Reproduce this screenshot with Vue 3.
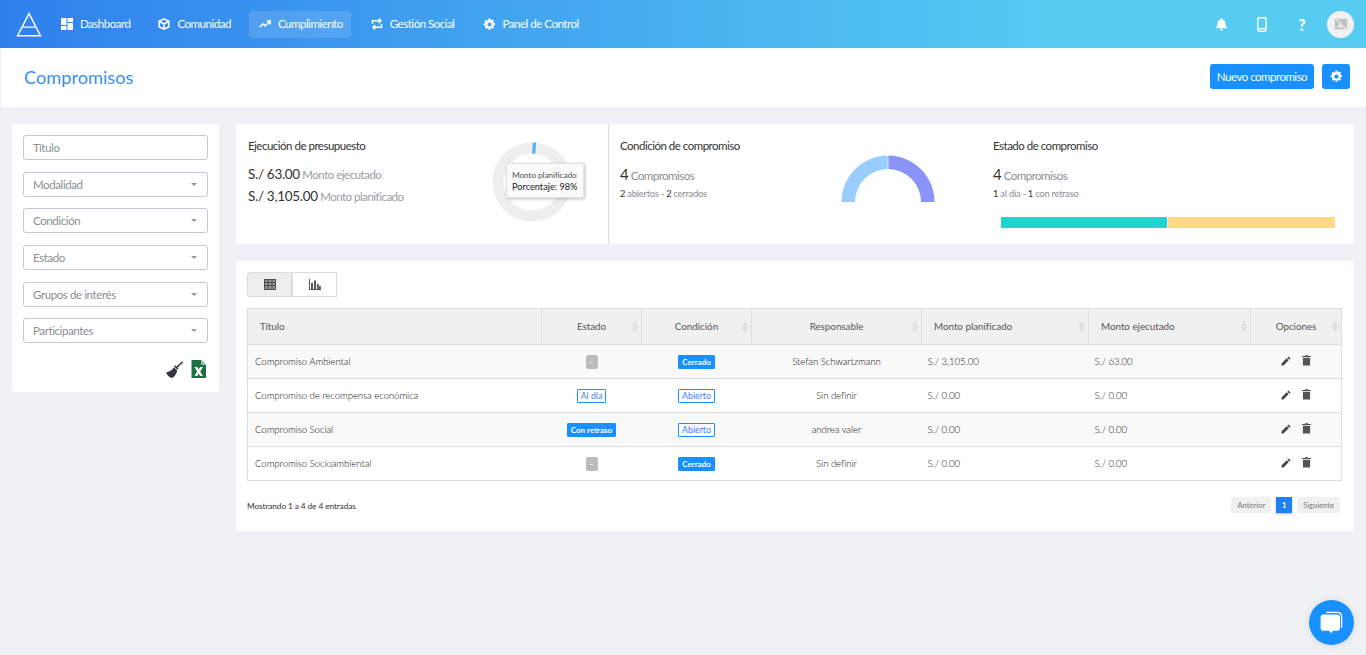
<script setup>
const nav = [
  { label: 'Dashboard', icon: 'dash' },
  { label: 'Comunidad', icon: 'cube' },
  { label: 'Cumplimiento', icon: 'trend', active: true },
  { label: 'Gestión Social', icon: 'retweet' },
  { label: 'Panel de Control', icon: 'gear' }
]
const filters = ['Modalidad', 'Condición', 'Estado', 'Grupos de interés', 'Participantes']
const cols = [
  { t: 'Título', w: 294, left: true, nosort: true },
  { t: 'Estado', w: 100 },
  { t: 'Condición', w: 110 },
  { t: 'Responsable', w: 170 },
  { t: 'Monto planificado', w: 167, left: true },
  { t: 'Monto ejecutado', w: 162, left: true },
  { t: 'Opciones', w: 91 }
]
const rows = [
  { t: 'Compromiso Ambiental', e: ['-', 'grey'], c: ['Cerrado', 'solid'], r: 'Stefan Schwartzmann', p: 'S./ 3,105.00', m: 'S./ 63.00' },
  { t: 'Compromiso de recompensa económica', e: ['Al día', 'line'], c: ['Abierto', 'line'], r: 'Sin definir', p: 'S./ 0.00', m: 'S./ 0.00' },
  { t: 'Compromiso Social', e: ['Con retraso', 'solid'], c: ['Abierto', 'line'], r: 'andrea valer', p: 'S./ 0.00', m: 'S./ 0.00' },
  { t: 'Compromiso Socioambiental', e: ['-', 'grey'], c: ['Cerrado', 'solid'], r: 'Sin definir', p: 'S./ 0.00', m: 'S./ 0.00' }
]
const gearPath = 'M10.300 1h3.400l.5 2.600 1.700.7 2.200-1.500 2.400 2.400-1.500 2.200.7 1.700 2.600.5v3.400l-2.600.5-.7 1.700 1.500 2.200-2.400 2.400-2.200-1.500-1.700.7-.5 2.600h-3.400l-.5-2.600-1.700-.7-2.200 1.500-2.400-2.400 1.500-2.200-.7-1.700L1 13.700v-3.400l2.600-.5.7-1.700-1.500-2.200 2.400-2.400 2.200 1.500 1.700-.7zM12 8.200a3.800 3.800 0 1 0 0 7.600 3.800 3.800 0 0 0 0-7.600z'
</script>

<template>
  <div class="page">
    <header class="topbar">
      <svg class="logo" viewBox="0 0 24 24" width="26" height="25" fill="none" stroke="#fff" stroke-width="1.400">
        <path d="M12 1.500 23 22.700H1zM5.250 14.500h13.500" />
      </svg>
      <nav class="nav">
        <a v-for="n in nav" :key="n.label" class="nav-item" :class="{ active: n.active }">
          <svg v-if="n.icon === 'dash'" viewBox="0 0 12 12" width="12" height="12" fill="#fff">
            <path d="M0 0h5.500v7H0zM6.500 0H12v4H6.500zM6.500 5H12v7H6.500zM0 8h5.500v4H0z" />
          </svg>
          <svg v-else-if="n.icon === 'cube'" viewBox="0 0 12 12" width="12" height="12" fill="none" stroke="#fff" stroke-width="1.600">
            <path d="M6 .9 10.800 3.200V8.800L6 11.100 1.200 8.800V3.200zM1.500 3.500 6 6l4.500-2.500M6 6v5" />
          </svg>
          <svg v-else-if="n.icon === 'trend'" viewBox="0 0 12 12" width="12" height="12" fill="none" stroke="#fff" stroke-width="1.500">
            <path d="M.6 9.200 4 5.800l2.200 2.200 4.500-4.600M7.800 3h3.400v3.400" />
          </svg>
          <svg v-else-if="n.icon === 'retweet'" viewBox="0 0 12 12" width="12" height="12" fill="none" stroke="#fff" stroke-width="1.500">
            <path d="M1.500 6V2.800h7.800M7.800.6l2.200 2.200L7.800 5M10.500 6v3.200H2.700M4.200 7 2 9.200l2.200 2.200" />
          </svg>
          <svg v-else viewBox="0 0 24 24" width="13" height="13" fill="#fff"><path :d="gearPath" /></svg>
          <span>{{ n.label }}</span>
        </a>
      </nav>
      <div class="top-right">
        <svg viewBox="0 0 12 14" width="11" height="13" fill="#fff">
          <path d="M6 0a1 1 0 0 1 1 1v.6c2 .4 3.300 2 3.300 4.200 0 3 1.700 4.200 1.700 4.800V11H0v-.4c0-.6 1.700-1.800 1.700-4.800C1.700 3.600 3 2 5 1.600V1a1 1 0 0 1 1-1zM4.400 12h3.200a1.600 1.600 0 0 1-3.200 0z" />
        </svg>
        <svg viewBox="0 0 10 15" width="10" height="15" fill="none" stroke="#fff" stroke-width="1.400">
          <rect x=".8" y=".8" width="8.400" height="13.400" rx="1.400" />
          <path d="M1 11.600h8" />
        </svg>
        <span class="help">?</span>
        <span class="avatar">
          <svg viewBox="0 0 16 16" width="14" height="14">
            <path d="M1 2h14v12H1z" fill="#bfc1c3" />
            <path d="M1 1 15 15" stroke="#f1f1f1" stroke-width="1.300" />
            <path d="M3 12 7 7l4 5z" fill="#e8e8e8" />
          </svg>
        </span>
      </div>
    </header>

    <section class="subheader">
      <h1>Compromisos</h1>
      <div class="sub-actions">
        <button class="btn">Nuevo compromiso</button>
        <button class="btn btn-icon">
          <svg viewBox="0 0 24 24" width="13" height="13" fill="#fff"><path :d="gearPath" /></svg>
        </button>
      </div>
    </section>

    <main class="content">
      <aside class="filters">
        <div class="field text">Título</div>
        <div v-for="f in filters" :key="f" class="field">
          <span>{{ f }}</span><i class="caret"></i>
        </div>
        <div class="filter-tools">
          <svg viewBox="0 0 16 16" width="17" height="17">
            <path d="M15.600.8 10 6" stroke="#3f4246" stroke-width="1.500" />
            <path d="M8.800 3.900l3 3-1.200 1.300-3-3z" fill="#3f4246" />
            <path d="M7.400 5.800 10.500 8.900C10 12 8 15 5.500 16 3 15.500.8 13 .2 10.500 3 10 6 8.500 7.400 5.800z" fill="#33363a" />
          </svg>
          <svg viewBox="0 0 15 18" width="15" height="18">
            <path d="M.500 0H10l5 5v13H.500z" fill="#1d6f42" />
            <path d="M10 0v5h5z" fill="#8fc2a5" />
            <path d="M3.500 7h2.800L7.700 9.600 9.100 7h2.800L9.200 11.500l2.700 4.500H9.100L7.700 13.400 6.300 16H3.500l2.700-4.500z" fill="#fff" />
          </svg>
        </div>
      </aside>

      <div class="main-col">
        <section class="stats card">
          <div class="stat stat-budget">
            <h3>Ejecución de presupuesto</h3>
            <p class="money"><b>S./ 63.00</b> Monto ejecutado</p>
            <p class="money"><b>S./ 3,105.00</b> Monto planificado</p>
            <div class="donut-wrap">
              <svg viewBox="0 0 80 80" width="80" height="80" fill="none">
                <circle cx="40" cy="40" r="34" stroke="#eeeeee" stroke-width="11" />
                <path d="M40.400 6 43.800 6.200" stroke="#5db1fb" stroke-width="11" />
              </svg>
              <div class="tip">
                <div class="tip-a">Monto planificado</div>
                <div class="tip-b">Porcentaje: 98%</div>
              </div>
            </div>
          </div>
          <div class="stat stat-cond">
            <h3>Condición de compromiso</h3>
            <p class="count"><b>4</b> Compromisos</p>
            <p class="small"><b>2</b> abiertos - <b>2</b> cerrados</p>
            <svg class="half" viewBox="0 0 94 47" width="94" height="47">
              <path d="M46.600 .5A46.500 46.500 0 0 0 .5 47H14A33 33 0 0 1 46.600 14z" fill="#99ccff" />
              <path d="M47.400 .5A46.500 46.500 0 0 1 93.500 47H80A33 33 0 0 0 47.400 14z" fill="#8a94f8" />
            </svg>
          </div>
          <div class="stat stat-state">
            <h3>Estado de compromiso</h3>
            <p class="count"><b>4</b> Compromisos</p>
            <p class="small"><b>1</b> al día - <b>1</b> con retraso</p>
            <div class="bar"><span class="teal"></span><span class="yellow"></span></div>
          </div>
        </section>

        <section class="card table-card">
          <div class="toggle">
            <button class="tg on">
              <svg viewBox="0 0 12 11" width="12" height="11" fill="#9a9a9a" stroke="#4f4f4f" stroke-width="1.100">
                <path d="M.5.500h11v10H.500zM.5 3.500h11M.5 6.500h11M4 .500v10M8 .500v10" />
              </svg>
            </button>
            <button class="tg">
              <svg viewBox="0 0 12 11" width="12" height="11" fill="#555">
                <path d="M0 0h1v10h11v1H0zM2 4h2v6H2zM5 1.500h2V10H5zM8 5h1.800v5H8zM10 7h1.800v3H10z" />
              </svg>
            </button>
          </div>

          <table class="grid">
            <colgroup>
              <col v-for="c in cols" :key="c.t" :style="{ width: c.w + 'px' }" />
            </colgroup>
            <thead>
              <tr>
                <th v-for="c in cols" :key="c.t" :class="{ left: c.left }">
                  {{ c.t }}
                  <span v-if="!c.nosort" class="sort"><i class="up"></i><i class="down"></i></span>
                </th>
              </tr>
            </thead>
            <tbody>
              <tr v-for="r in rows" :key="r.t">
                <td class="left first">{{ r.t }}</td>
                <td><span class="tag" :class="r.e[1]">{{ r.e[0] }}</span></td>
                <td><span class="tag" :class="r.c[1]">{{ r.c[0] }}</span></td>
                <td>{{ r.r }}</td>
                <td class="left">{{ r.p }}</td>
                <td class="left">{{ r.m }}</td>
                <td>
                  <span class="ops">
                    <svg viewBox="0 0 12 12" width="10" height="10" fill="#444">
                      <path d="M9 .6 11.400 3 10 4.400 7.600 2zM6.800 2.800 9.200 5.200 3 11.400H.6V9z" />
                    </svg>
                    <svg viewBox="0 0 10 12" width="9" height="11" fill="#555">
                      <path d="M1 3h8v8.500H1zM0 1h3.200V.2h3.600V1H10v1.200H0z" />
                    </svg>
                  </span>
                </td>
              </tr>
            </tbody>
          </table>

          <div class="foot">
            <span class="info">Mostrando 1 a 4 de 4 entradas</span>
            <div class="pager">
              <span class="pg">Anterior</span>
              <span class="pg cur">1</span>
              <span class="pg">Siguiente</span>
            </div>
          </div>
        </section>
      </div>
    </main>

    <div class="chat">
      <svg viewBox="0 0 32 30" width="25" height="24">
        <path d="M9 1.500h14c3.500 0 6 2 6 5.500v14" fill="none" stroke="#fff" stroke-width="1.700" />
        <path d="M6 4h17c2.500 0 4 1.500 4 4v13c0 2.500-1.500 4-4 4h-5l-2.500 3L13 25H6c-2.500 0-4-1.500-4-4V8c0-2.500 1.500-4 4-4z" fill="#fff" />
      </svg>
    </div>
  </div>
</template>

<style>
html, body { margin: 0; background: #f0f1f5; }
</style>

<style scoped>
.page {
  height: 655px;
  overflow: hidden;
  position: relative;
  background: #f0f1f5;
  font-family: Lato, "Liberation Sans", sans-serif;
  color: #333;
  font-size: 12px;
}
.topbar {
  height: 48px;
  display: flex;
  align-items: center;
  padding: 0 12px 0 16px;
  background: linear-gradient(90deg, #2f80ed 0%, #56ccf2 78%);
  color: #fff;
  box-sizing: border-box;
}
.logo { flex: none; }
.nav { display: flex; align-items: center; margin-left: 9px; gap: 10px; }
.nav-item {
  display: flex;
  align-items: center;
  gap: 7px;
  height: 27px;
  padding: 0 8px 0 10px;
  border-radius: 4px;
  font-size: 11.500px;
  letter-spacing: -0.480px;
}
.nav-item span { padding-bottom: 2px; }
.nav-item.active { background: rgba(255, 255, 255, 0.12); }
.top-right { margin-left: auto; display: flex; align-items: center; }
.top-right > svg:first-child { margin-right: 30px; }
.top-right > svg:nth-child(2) { margin-right: 30px; }
.help { font-weight: 900; font-size: 16px; width: 10px; text-align: center; margin-right: 20px; }
.avatar {
  width: 27px; height: 27px; border-radius: 50%;
  background: #f1f1f1;
  display: flex; align-items: center; justify-content: center;
}
.subheader {
  height: 59px;
  background: #fff;
  display: flex;
  align-items: center;
  justify-content: space-between;
  padding: 0 16px 0 24px;
  margin-left: 1px;
}
.subheader h1 {
  margin: 0 0 2px -1px;
  font-size: 18.200px;
  font-weight: 400;
  color: #3a8ef6;
}
.sub-actions { display: flex; gap: 8px; margin-bottom: 2px; }
.btn {
  height: 25px;
  padding: 0;
  border: 0;
  border-radius: 3px;
  background: #1890ff;
  color: #fff;
  font: 400 11.500px Lato, sans-serif;
  letter-spacing: -0.500px;
  white-space: nowrap;
  width: 104px;
}
.btn-icon { width: 28px; display: flex; align-items: center; justify-content: center; }
.content {
  display: flex;
  align-items: flex-start;
  padding: 17px 12px 0;
  gap: 17px;
}
.filters {
  width: 207px;
  height: 268px;
  flex: none;
  background: #fff;
  border-radius: 2px;
  padding: 11px 11px 0;
  box-sizing: border-box;
  display: flex;
  flex-direction: column;
  gap: 11.700px;
}
.field {
  height: 25px;
  box-sizing: border-box;
  border: 1px solid #c2c8d4;
  border-radius: 3px;
  padding: 0 10px 0 9px;
  display: flex;
  align-items: center;
  justify-content: space-between;
  color: #8a8d92;
  font-size: 11.500px;
  letter-spacing: -0.400px;
}
.caret {
  width: 0; height: 0;
  border-left: 3px solid transparent;
  border-right: 3px solid transparent;
  border-top: 3px solid #999;
}
.filter-tools {
  display: flex;
  justify-content: flex-end;
  align-items: center;
  gap: 8px;
  margin-top: 5px;
  padding-right: 2px;
}
.main-col { flex: 1; display: flex; flex-direction: column; gap: 17px; min-width: 0; }
.card { background: #fff; border-radius: 2px; }
.stats { height: 120px; display: flex; }
.stat { position: relative; padding: 15px 0 0 12px; box-sizing: border-box; }
.stat h3 { margin: 0; font-size: 11.500px; line-height: 14px; font-weight: 400; color: #333; letter-spacing: -0.500px; }
.stat-budget { width: 373px; border-right: 1px solid #dcdcdc; }
.stat-cond { width: 373px; padding-left: 11px; }
.stat-state { flex: 1; padding-left: 11px; }
.money { margin: 13px 0 0; line-height: 16px; color: #9a9da2; font-size: 11.500px; letter-spacing: -0.500px; }
.money + .money { margin-top: 5px; }
.money b { font-weight: 400; color: #333; font-size: 13.500px; letter-spacing: -0.300px; }
.count { margin: 12px 0 0; line-height: 18px; color: #8a8d92; font-size: 11.500px; letter-spacing: -0.500px; }
.count b { font-weight: 400; color: #333; font-size: 15px; }
.small { margin: 3px 0 0; line-height: 12px; font-size: 9.400px; color: #8a8d92; letter-spacing: -0.250px; }
.small b { font-weight: 400; color: #333; }
.donut-wrap { position: absolute; left: 256px; top: 18px; width: 80px; height: 80px; }
.donut-wrap svg { display: block; }
.tip {
  position: absolute;
  left: 14px; top: 21px;
  width: 78px; height: 35px;
  box-sizing: border-box;
  padding: 6px 5px;
  background: rgba(250, 250, 250, 0.92);
  border: 1px solid #e2e2e2;
  box-shadow: 1px 1px 3px rgba(0, 0, 0, 0.25);
  color: #333;
  white-space: nowrap;
}
.tip-a { font-size: 8.300px; line-height: 11px; color: #555; letter-spacing: -0.100px; }
.tip-b { font-size: 9.200px; line-height: 11px; color: #222; }
.half { position: absolute; left: 232px; top: 31px; }
.bar { display: flex; height: 11px; width: 334px; margin: 17px 0 0 8px; }
.teal { width: 166px; background: #22d3d0; margin-right: 1px; }
.yellow { flex: 1; background: #fdd985; }
.table-card { height: 270px; padding: 11px 12px 0 11px; box-sizing: border-box; }
.toggle { display: flex; }
.tg {
  width: 45px; height: 25px;
  background: #fff;
  border: 1px solid #dcdcdc;
  padding: 0;
  display: flex; align-items: center; justify-content: center;
}
.tg.on { background: #eeeeee; border-radius: 3px 0 0 3px; }
.grid {
  margin-top: 11px;
  width: 1094px;
  border-collapse: collapse;
  table-layout: fixed;
  font-size: 9.700px;
  font-weight: 300;
  color: #111;
  letter-spacing: -0.100px;
}
.grid th, .grid td { border: 1px solid #dedede; text-align: center; padding: 0; position: relative; }
.grid td { border-left: 0; border-right: 0; padding-bottom: 2px; box-sizing: border-box; height: 34px; }
.grid td:first-child { border-left: 1px solid #dedede; }
.grid td:last-child { border-right: 1px solid #dedede; }
.grid th { height: 36px; box-sizing: border-box; padding-bottom: 1px; background: #f0f0f0; font-weight: 400; color: #555; font-size: 9.900px; letter-spacing: -0.050px; }
.grid th.left { text-align: left; padding-left: 12px; }
.grid td.left { text-align: left; padding-left: 6px; }
.grid td.first { padding-left: 7px; }
.grid tbody tr:nth-child(odd) { background: #f9f9f9; }
.sort { position: absolute; right: 3px; top: 12px; display: flex; flex-direction: column; gap: 1px; }
.sort i { width: 0; height: 0; border-left: 3px solid transparent; border-right: 3px solid transparent; }
.sort .up { border-bottom: 5px solid #dddddd; }
.sort .down { border-top: 5px solid #dddddd; }
.tag {
  display: inline-block;
  box-sizing: border-box;
  height: 14px;
  line-height: 12px;
  margin-top: 2px;
  padding: 0 3px;
  font-size: 8px;
  font-weight: 700;
  border-radius: 1px;
  border: 1px solid #1890ff;
  vertical-align: middle;
  letter-spacing: 0;
}
.tag.solid { background: #1890ff; color: #fff; }
.tag.line { background: #fff; color: #3e7cf0; font-weight: 400; font-size: 8.800px; }
.tag.grey { background: #bbb; border-color: #bbb; color: #fff; width: 12px; padding: 0; border-radius: 2px; }
.ops { display: inline-flex; align-items: center; gap: 11px; margin-top: 2px; }
.foot { display: flex; justify-content: space-between; align-items: center; margin-top: 18px; padding-right: 2px; }
.info { font-size: 8.300px; color: #333; letter-spacing: -0.100px; }
.pager { display: flex; align-items: center; gap: 5px; margin-top: -2px; }
.pg {
  height: 16px; line-height: 16px;
  padding: 0 6px;
  background: #f0f0f0;
  border-radius: 2px;
  font-size: 7.600px;
  color: #777;
}
.pg.cur { background: #1f80f0; color: #fff; font-weight: 700; padding: 0; width: 16px; text-align: center; box-shadow: 0 1px 2px rgba(0,0,0,.3); border-radius: 0; }
.chat {
  position: absolute;
  left: 1309px; top: 600px;
  width: 45px; height: 45px;
  border-radius: 50%;
  background: #1890ff;
  box-shadow: 0 1px 8px rgba(0, 0, 0, 0.1);
  display: flex; align-items: center; justify-content: center;
}
</style>
